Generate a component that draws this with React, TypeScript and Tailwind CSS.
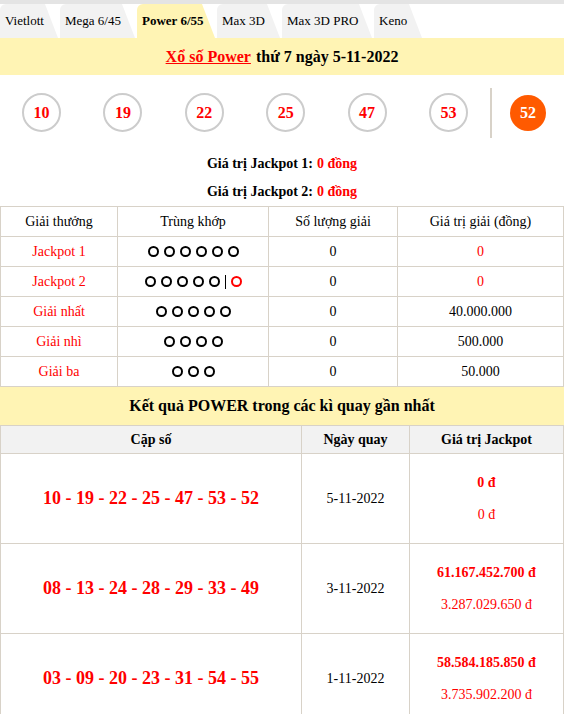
import React from 'react';

const tabs = [
  { label: 'Vietlott', w: 'w-[58px]' },
  { label: 'Mega 6/45', w: 'w-[75px]' },
  { label: 'Power 6/55', w: 'w-[78px]', active: true },
  { label: 'Max 3D', w: 'w-[63px]' },
  { label: 'Max 3D PRO', w: 'w-[90px]' },
  { label: 'Keno', w: 'w-[48px]' },
];

const balls = ['10', '19', '22', '25', '47', '53'];

const prizes = [
  { name: 'Jackpot 1', dots: 6, extra: false, count: '0', value: '0', red: true },
  { name: 'Jackpot 2', dots: 5, extra: true, count: '0', value: '0', red: true },
  { name: 'Giải nhất', dots: 5, extra: false, count: '0', value: '40.000.000', red: false },
  { name: 'Giải nhì', dots: 4, extra: false, count: '0', value: '500.000', red: false },
  { name: 'Giải ba', dots: 3, extra: false, count: '0', value: '50.000', red: false },
];

const results = [
  { nums: '10 - 19 - 22 - 25 - 47 - 53 - 52', date: '5-11-2022', j1: '0 đ', j2: '0 đ' },
  { nums: '08 - 13 - 24 - 28 - 29 - 33 - 49', date: '3-11-2022', j1: '61.167.452.700 đ', j2: '3.287.029.650 đ' },
  { nums: '03 - 09 - 20 - 23 - 31 - 54 - 55', date: '1-11-2022', j1: '58.584.185.850 đ', j2: '3.735.902.200 đ' },
];

const Dot = ({ red }: { red?: boolean }) => (
  <span
    className={`inline-block w-[11px] h-[11px] rounded-full border-[2.5px] ${red ? 'border-[#ff0000]' : 'border-black'}`}
  />
);

export default function App() {
  return (
    <div className="w-[564px] bg-white font-['Liberation_Serif',serif] text-black">
      {/* tabs */}
      <div className="bg-[#e4e4e4] pt-[4px]">
        <div className="flex gap-[2px] bg-white">
          {tabs.map((t) => (
            <div
              key={t.label}
              className={`${t.w} h-[34px] flex items-center pl-[5px] text-[13px] rounded-tl-[6px] [clip-path:polygon(0_0,calc(100%-13px)_0,100%_100%,0_100%)] ${
                t.active ? 'bg-[#fff4b4] font-bold' : 'bg-[#f2f2f2]'
              }`}
            >
              <span className="whitespace-nowrap">{t.label}</span>
            </div>
          ))}
        </div>
      </div>

      {/* title */}
      <div className="h-[37px] bg-[#fff4b4] flex items-center justify-center text-[16px] font-bold">
        <span className="text-[#ff0000] underline">Xổ số Power</span>
        <span className="ml-[5px]">thứ 7 ngày 5-11-2022</span>
      </div>

      {/* balls */}
      <div className="h-[75px] flex items-center pl-[22px]">
        <div className="flex gap-[42.4px]">
          {balls.map((b) => (
            <div
              key={b}
              className="w-[39px] h-[39px] rounded-full border-2 border-[#cccccc] flex items-center justify-center text-[#ff0000] font-bold text-[16px]"
            >
              {b}
            </div>
          ))}
        </div>
        <div className="ml-[22px] w-[2px] h-[50px] bg-[#d8d2c8]" />
        <div className="ml-[18px] w-[36px] h-[36px] rounded-full bg-[#ff5a00] flex items-center justify-center text-white font-bold text-[16px]">
          52
        </div>
      </div>

      {/* jackpot values */}
      <div className="flex flex-col items-center text-[14px] font-bold">
        <div className="h-[26px] flex items-center">
          Giá trị Jackpot 1:<span className="text-[#ff0000] ml-[4px]">0 đồng</span>
        </div>
        <div className="h-[30px] flex items-center">
          Giá trị Jackpot 2:<span className="text-[#ff0000] ml-[4px]">0 đồng</span>
        </div>
      </div>

      {/* prize table */}
      <table className="w-full border-collapse text-[14px] table-fixed">
        <colgroup>
          <col className="w-[117px]" />
          <col className="w-[151px]" />
          <col className="w-[129px]" />
          <col />
        </colgroup>
        <thead>
          <tr className="h-[30px]">
            {['Giải thưởng', 'Trùng khớp', 'Số lượng giải', 'Giá trị giải (đồng)'].map((h) => (
              <th key={h} className="border border-[#d8d2c8] font-normal text-center">
                {h}
              </th>
            ))}
          </tr>
        </thead>
        <tbody>
          {prizes.map((p) => (
            <tr key={p.name} className="h-[30px]">
              <td className="border border-[#d8d2c8] text-center text-[#ff0000]">{p.name}</td>
              <td className="border border-[#d8d2c8]">
                <div className="flex items-center justify-center gap-[5px]">
                  {Array.from({ length: p.dots }).map((_, i) => (
                    <Dot key={i} />
                  ))}
                  {p.extra && (
                    <>
                      <span className="w-[1px] h-[14px] bg-black" />
                      <Dot red />
                    </>
                  )}
                </div>
              </td>
              <td className="border border-[#d8d2c8] text-center">{p.count}</td>
              <td className={`border border-[#d8d2c8] text-center ${p.red ? 'text-[#ff0000]' : ''}`}>
                {p.value}
              </td>
            </tr>
          ))}
        </tbody>
      </table>

      {/* recent results */}
      <div className="h-[38px] bg-[#fff4b4] flex items-center justify-center text-[16px] font-bold">
        Kết quả POWER trong các kì quay gần nhất
      </div>
      <table className="w-full border-collapse table-fixed text-[14px]">
        <colgroup>
          <col className="w-[301px]" />
          <col className="w-[108px]" />
          <col />
        </colgroup>
        <thead>
          <tr className="h-[28px] bg-[#f2f2f2]">
            {['Cặp số', 'Ngày quay', 'Giá trị Jackpot'].map((h) => (
              <th key={h} className="border border-[#d8d2c8] font-bold text-center">
                {h}
              </th>
            ))}
          </tr>
        </thead>
        <tbody>
          {results.map((r) => (
            <tr key={r.date} className="h-[90px]">
              <td className="border border-[#d8d2c8] text-center text-[#ff0000] font-bold text-[18px]">
                {r.nums}
              </td>
              <td className="border border-[#d8d2c8] text-center">{r.date}</td>
              <td className="border border-[#d8d2c8] text-center text-[#ff0000]">
                <div className="font-bold">{r.j1}</div>
                <div className="mt-[11px]">{r.j2}</div>
              </td>
            </tr>
          ))}
        </tbody>
      </table>
    </div>
  );
}
